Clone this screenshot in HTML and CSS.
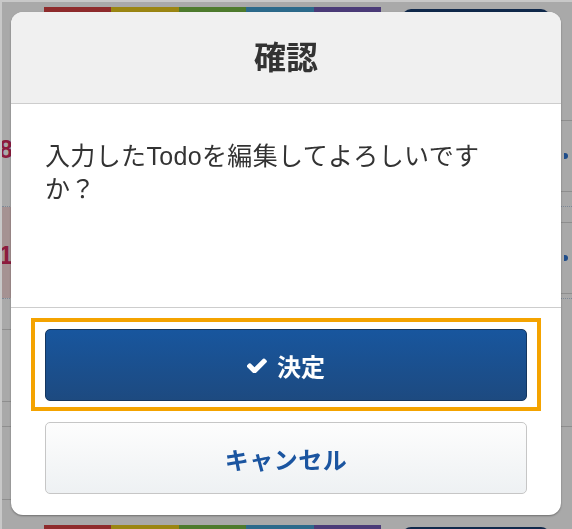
FILE: index.html
```html
<!DOCTYPE html>
<html lang="ja">
<head>
<meta charset="utf-8">
<title>確認</title>
<link rel="stylesheet" href="styles.css">
</head>
<body>
<div class="page">
  <div class="topbar">
    <div class="stripe">
      <span class="seg red"></span><span class="seg olive"></span><span class="seg green"></span><span class="seg blue"></span><span class="seg purple"></span>
    </div>
    <div class="navbtn"></div>
  </div>
  <div class="row r1">
    <div class="mark"><span class="num">8</span></div>
    <div class="chev"><span class="dot"></span></div>
  </div>
  <div class="row r2">
    <div class="mark pink"><span class="num">1</span></div>
    <div class="chev"><span class="dot"></span></div>
  </div>
  <div class="ln h31"></div>
  <div class="ln h72"></div>
  <div class="ln h25 full"></div>
  <div class="ln h73"></div>
  <div class="bottombar">
    <div class="stripe">
      <span class="seg red"></span><span class="seg olive"></span><span class="seg green"></span><span class="seg blue"></span><span class="seg purple"></span>
    </div>
    <div class="navbtn"></div>
  </div>
</div>

<div class="overlay">
  <div class="dialog" role="dialog">
    <div class="dialog-header">
      <h1 class="title">確認</h1>
    </div>
    <div class="dialog-body">
      <p class="message">入力したTodoを編集してよろしいですか？</p>
    </div>
    <div class="dialog-footer">
      <div class="focus-ring">
        <button class="btn btn-primary">
          <svg class="check" viewBox="140 326 1535 1104" aria-hidden="true"><path d="M1671 566q0 40-28 68l-724 724-136 136q-28 28-68 28t-68-28l-136-136-362-362q-28-28-28-68t28-68l136-136q28-28 68-28t68 28l294 295 656-657q28-28 68-28t68 28l136 136q28 28 28 68z" fill="#fff"/></svg>
          <span>決定</span>
        </button>
      </div>
      <button class="btn btn-secondary">キャンセル</button>
    </div>
  </div>
</div>
</body>
</html>
```

FILE: styles.css
```css
*, *::before, *::after {
  box-sizing: border-box;
}

html, body {
  margin: 0;
  padding: 0;
  width: 572px;
  height: 529px;
  overflow: hidden;
}

body {
  font-family: "Liberation Sans", "Noto Sans CJK JP", sans-serif;
  background: #a9a9a9;
}

/* ---------- dimmed page behind the dialog ---------- */
.page {
  height: 529px;
  border-top: 2px solid #c8c8c8;
  border-left: 2px solid #c8c8c8;
  background: #a9a9a9;
  overflow: hidden;
  display: flex;
  flex-direction: column;
}

.topbar {
  height: 98px;
  flex: none;
  padding-top: 5px;
  display: flex;
  align-items: flex-start;
}

.stripe {
  display: flex;
  width: 337px;
  height: 5px;
  margin-left: 42px;
  flex: none;
}

.seg { flex: 1; }
.seg.red { background: #8f2b2c; }
.seg.olive { background: #9b8612; }
.seg.green { background: #4e7b2d; }
.seg.blue { background: #2c6a8b; }
.seg.purple { background: #4b3b78; }

.navbtn {
  margin-left: 21px;
  margin-top: 2px;
  width: 148px;
  height: 40px;
  background: #10294b;
  border-radius: 9px;
  flex: none;
}

.row {
  flex: none;
  display: flex;
  justify-content: space-between;
  background: #a9a9a9;
  border-bottom: 1px dotted #7d8896;
}

.r1 { height: 107px; }
.r2 { height: 92px; }

.mark {
  width: 40px;
  display: flex;
  align-items: center;
  background: #a9a9a9;
}

.mark.pink { background: #a59292; }

.num {
  font-family: "Liberation Sans", sans-serif;
  font-weight: bold;
  font-size: 25px;
  line-height: 1;
  color: #8c1b3d;
  margin-left: -3px;
}

.r1 .num { margin-top: -8px; }
.r2 .num { margin-top: 6px; }

.chev {
  width: 20px;
  height: 72px;
  border-top: 1px solid #8e8e8e;
  border-bottom: 1px solid #8e8e8e;
  display: flex;
  align-items: center;
}

.r1 .chev { margin-top: 20px; }
.r2 .chev { margin-top: 15px; }

.dot {
  display: block;
  width: 4px;
  height: 6px;
  margin-left: 12px;
  border-radius: 0 3px 3px 0;
  background: #1f4d8a;
}

.ln {
  flex: none;
  width: 30px;
  border-bottom: 1px solid #8e8e8e;
}

.ln.full { width: auto; }
.h31 { height: 31px; }
.h72 { height: 72px; }
.h25 { height: 25px; }
.h73 { height: 73px; }

.bottombar {
  margin-top: auto;
  height: 4px;
  flex: none;
  display: flex;
  align-items: flex-start;
}

.bottombar .stripe { height: 4px; }
.bottombar .navbtn { margin-top: 2px; }

/* ---------- dialog ---------- */
.overlay {
  position: fixed;
  inset: 0;
  display: flex;
  align-items: flex-start;
  padding: 12px 11px;
}

.dialog {
  flex: 1;
  background: #fff;
  border-radius: 12px;
  overflow: hidden;
  box-shadow: 0 1px 2px rgba(0, 0, 0, 0.35);
}

.dialog-header {
  background: #f0f0f0;
  border-bottom: 1px solid #cdcdcd;
  height: 92px;
  display: flex;
  align-items: center;
  justify-content: center;
}

.title {
  margin: 0;
  font-size: 32px;
  line-height: 32px;
  font-weight: bold;
  color: #333;
}

.dialog-body {
  height: 204px;
  border-bottom: 1px solid #cdcdcd;
  padding: 36px 60px 0 34px;
}

.message {
  margin: 0;
  font-size: 25px;
  line-height: 33px;
  letter-spacing: 0.35px;
  color: #333;
}

.dialog-footer {
  padding: 10px 20px 21px;
  display: flex;
  flex-direction: column;
}

.focus-ring {
  border: 4px solid #f4a300;
  padding: 7px 10px 6px;
}

.btn {
  display: flex;
  align-items: center;
  justify-content: center;
  gap: 10px;
  width: 100%;
  height: 72px;
  border-radius: 5px;
  font-family: "Liberation Sans", "Noto Sans CJK JP", sans-serif;
  font-size: 24px;
  font-weight: bold;
  padding: 0;
  cursor: pointer;
}

.btn-primary {
  background: linear-gradient(#18569e, #1d4a80);
  border: 1px solid #14365f;
  color: #fff;
}

.check {
  width: 20px;
  height: 15px;
}

.btn-secondary {
  margin: 11px 14px 0;
  width: auto;
  background: linear-gradient(#fdfdfd, #eef1f3);
  border: 1px solid #c6c6c6;
  color: #1b55a0;
  letter-spacing: 0.5px;
}
```
